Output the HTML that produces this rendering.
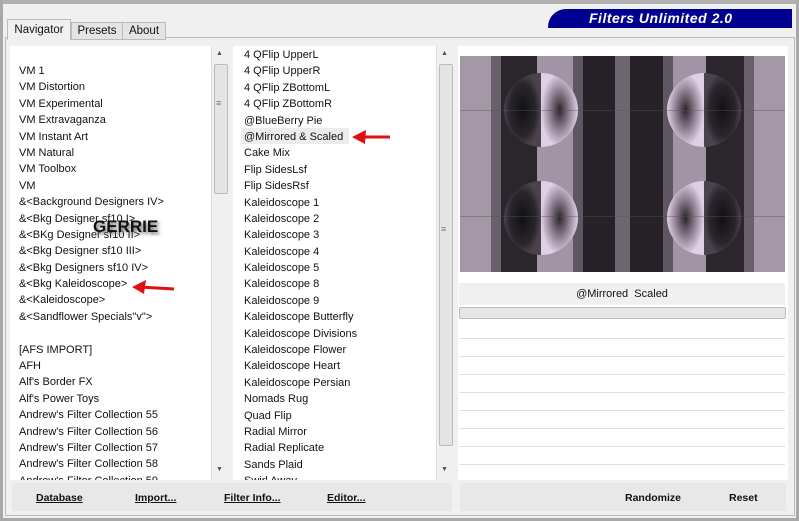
<html><head><style>
body{margin:0;width:799px;height:521px;background:#f0f0f0;font-family:"Liberation Sans",sans-serif;font-size:11px;color:#111;position:relative;overflow:hidden}
.a{position:absolute}
.list div{height:16.4px;line-height:16.4px;white-space:nowrap}
.sb{background:#f0f0f0;border-left:1px solid #ddd}
.thumb{position:absolute;left:2px;width:12px;background:#e4e4e4;border:1px solid #bbb;border-radius:2px}
.btn{position:absolute;top:492px;font-weight:bold;font-size:10.5px;text-decoration:underline}
.ln{position:absolute;left:459px;width:326px;height:1px;background:#e0e0e0}
</style></head><body>
<div class="a" style="left:0;top:0;width:799px;height:521px;box-sizing:border-box;border:3px solid #a8a8a8;border-top:4px solid #b0b0b0"></div>
<div class="a" style="left:548px;top:9px;width:244px;height:19px;background:#000090;border-radius:18px 0 0 0"></div>
<div class="a" style="left:589px;top:10px;font:italic bold 14px 'Liberation Sans',sans-serif;color:#fff;letter-spacing:0.5px">Filters Unlimited 2.0</div>
<div class="a" style="left:5px;top:37px;width:788px;height:477px;border:1px solid #bbb;background:#f0f0f0"></div>
<div class="a" style="left:7px;top:19px;width:62px;height:20px;background:#f0f0f0;border:1px solid #bbb;border-bottom:none;line-height:20px;text-align:center;font-size:11.5px">Navigator</div>
<div class="a" style="left:71px;top:22px;width:50px;height:16px;background:#e4e4e4;border:1px solid #bbb;line-height:16px;text-align:center;font-size:11.5px">Presets</div>
<div class="a" style="left:122px;top:22px;width:42px;height:16px;background:#e4e4e4;border:1px solid #bbb;line-height:16px;text-align:center;font-size:11.5px">About</div>
<div class="a" style="left:10px;top:46px;width:202px;height:434px;background:#fff;overflow:hidden">
<div class="list a" style="left:9px;top:17px">
<div>VM 1</div><div>VM Distortion</div><div>VM Experimental</div><div>VM Extravaganza</div><div>VM Instant Art</div><div>VM Natural</div><div>VM Toolbox</div><div>VM</div><div>&amp;&lt;Background Designers IV&gt;</div><div>&amp;&lt;Bkg Designer sf10 I&gt;</div><div>&amp;&lt;BKg Designer sf10 II&gt;</div><div>&amp;&lt;Bkg Designer sf10 III&gt;</div><div>&amp;&lt;Bkg Designers sf10 IV&gt;</div><div>&amp;&lt;Bkg Kaleidoscope&gt;</div><div>&amp;&lt;Kaleidoscope&gt;</div><div>&amp;&lt;Sandflower Specials"v"&gt;</div><div>&nbsp;</div><div>[AFS IMPORT]</div><div>AFH</div><div>Alf's Border FX</div><div>Alf's Power Toys</div><div>Andrew's Filter Collection 55</div><div>Andrew's Filter Collection 56</div><div>Andrew's Filter Collection 57</div><div>Andrew's Filter Collection 58</div><div>Andrew's Filter Collection 59</div>
</div></div>
<div class="a" style="left:93px;top:217px;font-weight:bold;font-size:17px;color:#111;text-shadow:2px 2px 3px #666">GERRIE</div>
<div class="a sb" style="left:211px;top:46px;width:16px;height:434px"><div class="a" style="left:4px;top:4px;font-size:7px;color:#555">▲</div><div class="thumb" style="top:18px;height:128px"></div><div class="a" style="left:4px;top:52px;font-size:9px;color:#777">≡</div><div class="a" style="left:4px;top:420px;font-size:7px;color:#555">▼</div></div>
<div class="a" style="left:233px;top:46px;width:204px;height:434px;background:#fff;overflow:hidden">
<div class="a" style="left:8px;top:82px;width:108px;height:16px;background:#ececec"></div>
<div class="list a" style="left:11px;top:1px">
<div>4 QFlip UpperL</div><div>4 QFlip UpperR</div><div>4 QFlip ZBottomL</div><div>4 QFlip ZBottomR</div><div>@BlueBerry Pie</div><div>@Mirrored &amp; Scaled</div><div>Cake Mix</div><div>Flip SidesLsf</div><div>Flip SidesRsf</div><div>Kaleidoscope 1</div><div>Kaleidoscope 2</div><div>Kaleidoscope 3</div><div>Kaleidoscope 4</div><div>Kaleidoscope 5</div><div>Kaleidoscope 8</div><div>Kaleidoscope 9</div><div>Kaleidoscope Butterfly</div><div>Kaleidoscope Divisions</div><div>Kaleidoscope Flower</div><div>Kaleidoscope Heart</div><div>Kaleidoscope Persian</div><div>Nomads Rug</div><div>Quad Flip</div><div>Radial Mirror</div><div>Radial Replicate</div><div>Sands Plaid</div><div>Swirl Away</div>
</div></div>
<div class="a sb" style="left:436px;top:46px;width:16px;height:434px"><div class="a" style="left:4px;top:4px;font-size:7px;color:#555">▲</div><div class="thumb" style="top:18px;height:380px"></div><div class="a" style="left:4px;top:178px;font-size:9px;color:#777">≡</div><div class="a" style="left:4px;top:420px;font-size:7px;color:#555">▼</div></div>
<svg class="a" style="left:130px;top:278px" width="46" height="20"><line x1="10" y1="9" x2="44" y2="11" stroke="#e01010" stroke-width="3"/><polygon points="2,9 16,2 14,16" fill="#e01010"/></svg>
<svg class="a" style="left:350px;top:127px" width="42" height="20"><line x1="10" y1="10" x2="40" y2="10" stroke="#e01010" stroke-width="3"/><polygon points="2,10 16,3 15,17" fill="#e01010"/></svg>
<div class="a" style="left:458px;top:46px;width:330px;height:434px;background:#fff"></div>
<svg class="a" style="left:460px;top:56px" width="325" height="216">
<defs>
<radialGradient id="d" cx="0.5" cy="0.5" r="0.5"><stop offset="0" stop-color="#111"/><stop offset="0.7" stop-color="#2a252c"/><stop offset="1" stop-color="#4a424c"/></radialGradient>
<radialGradient id="l" cx="0.5" cy="0.5" r="0.5"><stop offset="0" stop-color="#2a252c"/><stop offset="0.5" stop-color="#8a7a8c"/><stop offset="1" stop-color="#e0d0e6"/></radialGradient>
</defs>
<rect width="325" height="216" fill="#a497a6"/>
<rect x="31" width="10" height="216" fill="#6a606c"/>
<rect x="41" width="36" height="216" fill="#2a262c"/>
<rect x="77" width="36" height="216" fill="#a294a4"/>
<rect x="113" width="10" height="216" fill="#5e5660"/>
<rect x="123" width="36" height="216" fill="#262228"/>
<rect x="155" width="15" height="216" fill="#6e6670"/>
<rect x="170" width="33" height="216" fill="#262228"/>
<rect x="203" width="10" height="216" fill="#5e5660"/>
<rect x="213" width="33" height="216" fill="#a294a4"/>
<rect x="246" width="38" height="216" fill="#2a262c"/>
<rect x="284" width="10" height="216" fill="#6a606c"/>
<g>
<path d="M81,17 A37,37 0 0 0 81,91 Z" fill="url(#d)"/><path d="M81,17 A37,37 0 0 1 81,91 Z" fill="url(#l)"/>
<path d="M81,125 A37,37 0 0 0 81,199 Z" fill="url(#d)"/><path d="M81,125 A37,37 0 0 1 81,199 Z" fill="url(#l)"/>
<path d="M244,17 A37,37 0 0 0 244,91 Z" fill="url(#l)"/><path d="M244,17 A37,37 0 0 1 244,91 Z" fill="url(#d)"/>
<path d="M244,125 A37,37 0 0 0 244,199 Z" fill="url(#l)"/><path d="M244,125 A37,37 0 0 1 244,199 Z" fill="url(#d)"/>
</g>
<rect y="54" width="325" height="1" fill="#555" opacity="0.4"/><rect y="160" width="325" height="1" fill="#555" opacity="0.4"/>
</svg>
<div class="a" style="left:459px;top:283px;width:326px;height:22px;background:#f0f0f0;text-align:center;line-height:22px">@Mirrored&nbsp; Scaled</div>
<div class="a" style="left:459px;top:307px;width:325px;height:10px;background:#e6e6e6;border:1px solid #bbb;border-radius:2px"></div>
<div class="ln" style="top:338px"></div><div class="ln" style="top:356px"></div><div class="ln" style="top:374px"></div><div class="ln" style="top:392px"></div><div class="ln" style="top:410px"></div><div class="ln" style="top:428px"></div><div class="ln" style="top:446px"></div><div class="ln" style="top:464px"></div>
<div class="a" style="left:12px;top:483px;width:440px;height:28px;background:#e8e8e8"></div>
<div class="a" style="left:460px;top:483px;width:326px;height:28px;background:#e8e8e8"></div>
<div class="btn" style="left:36px">Database</div>
<div class="btn" style="left:135px">Import...</div>
<div class="btn" style="left:224px">Filter Info...</div>
<div class="btn" style="left:327px">Editor...</div>
<div class="btn" style="left:625px;text-decoration:none">Randomize</div>
<div class="btn" style="left:729px;text-decoration:none">Reset</div>
</body></html>
